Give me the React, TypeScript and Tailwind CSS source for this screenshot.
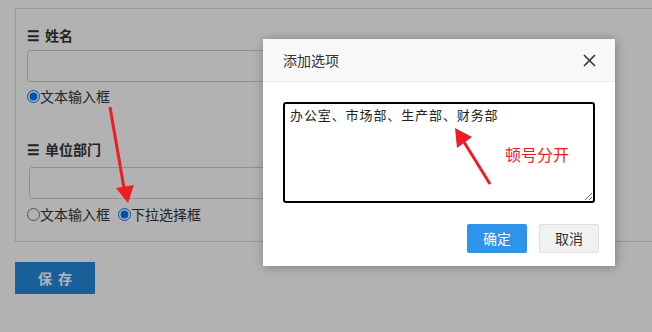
const font = { fontFamily: '"Noto Sans CJK SC", "Noto Sans", sans-serif' };

function Radio({ label, checked }: { label: string; checked?: boolean }) {
  return (
    <label className="flex items-center">
      <input type="radio" readOnly checked={!!checked} className="m-0 w-[13px] h-[13px]" />
      <span>{label}</span>
    </label>
  );
}

function FieldLabel({ text }: { text: string }) {
  return (
    <div className="flex items-center h-5 font-bold text-[14px] text-[#333]">
      <span className="mr-[5px]">☰</span>
      <span>{text}</span>
    </div>
  );
}

export default function App() {
  return (
    <div className="relative w-[652px] h-[332px] overflow-hidden bg-white" style={font}>
      {/* page behind the dialog */}
      <div className="pt-2 pl-[15px]">
        <div className="w-[700px] h-[234px] border border-[#dcdcdc] px-[11px] pt-[16px] text-[14px] text-[#333]">
          <FieldLabel text="姓名" />
          <div className="mt-[5px] w-[560px] h-[32px] border border-[#cfcfcf] rounded-[3px] bg-white" />
          <div className="mt-[4px] h-5 flex items-center">
            <Radio label="文本输入框" checked />
          </div>
          <div className="mt-[33px]">
            <FieldLabel text="单位部门" />
          </div>
          <div className="mt-[8px] ml-[2px] w-[560px] h-[32px] border border-[#cfcfcf] rounded-[3px] bg-white" />
          <div className="mt-[5px] h-5 flex items-center gap-2">
            <Radio label="文本输入框" />
            <Radio label="下拉选择框" checked />
          </div>
        </div>
        <button className="mt-[20px] w-20 h-8 bg-[#2588dc] text-white font-bold text-[14px] tracking-[6px] pl-[6px]">
          保存
        </button>
      </div>

      {/* shade */}
      <div className="absolute inset-0 bg-black/30" />

      {/* dialog */}
      <div className="absolute left-[263px] top-[39px] w-[352px] h-[227px] bg-white shadow-[1px_1px_10px_rgba(0,0,0,0.3)]">
        <div className="h-[43px] bg-[#f8f8f8] border-b border-[#eee] flex items-center justify-between pl-5 pr-[19px]">
          <span className="text-[14px] text-[#333]">添加选项</span>
          <svg width="13" height="13" viewBox="0 0 13 13">
            <path d="M1 1 L12 12 M12 1 L1 12" stroke="#333" strokeWidth="1.6" />
          </svg>
        </div>
        <div className="pt-5 pl-5">
          <textarea
            readOnly
            defaultValue="办公室、市场部、生产部、财务部"
            className="block w-[312px] h-[101px] border-2 border-black rounded-[3px] px-[5px] py-[2px] text-[13px] leading-[18px] tracking-[0.9px] text-[#222] outline-none resize"
            style={font}
          />
        </div>
        <div className="mt-[21px] flex justify-end gap-3 pr-4">
          <button className="w-[60px] h-[29px] bg-[#2f92eb] text-white text-[14px] rounded-[2px]">确定</button>
          <button className="w-[60px] h-[29px] bg-[#f1f1f1] border border-[#dedede] text-[#333] text-[14px] rounded-[2px]">
            取消
          </button>
        </div>
      </div>

      {/* annotations */}
      <svg className="absolute inset-0" width="652" height="332" viewBox="0 0 652 332">
        <line x1="110" y1="107" x2="124" y2="188" stroke="#ee1c25" strokeWidth="3" />
        <polygon points="128,203 116,188 134,185" fill="#ee1c25" />
        <line x1="490" y1="184" x2="464" y2="142" stroke="#ee1c25" strokeWidth="3" />
        <polygon points="455,128 457,148 472,137" fill="#ee1c25" />
      </svg>
      <div className="absolute left-[505px] top-[143px] text-[16px] leading-[22px] text-[#ee1c25]">顿号分开</div>
    </div>
  );
}
